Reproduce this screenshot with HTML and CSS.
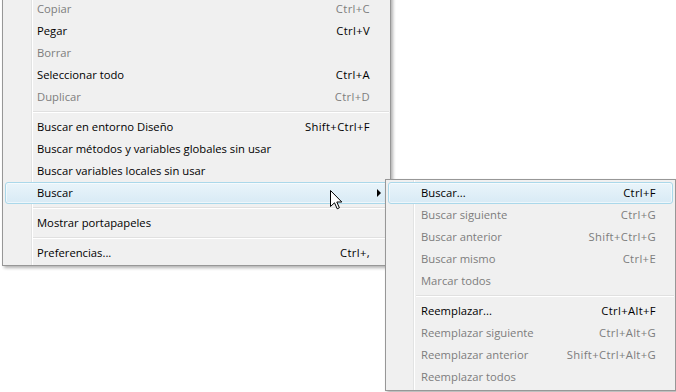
FILE: index.html
```html
<!DOCTYPE html>
<html lang="es">
<head>
<meta charset="utf-8">
<title>Menú Editar</title>
<link rel="stylesheet" href="styles.css">
</head>
<body>
<div class="stage">
  <div class="menu main">
    <div class="item disabled"><span class="label">Copiar</span><span class="key">Ctrl+C</span></div>
    <div class="item"><span class="label">Pegar</span><span class="key">Ctrl+V</span></div>
    <div class="item disabled"><span class="label">Borrar</span></div>
    <div class="item"><span class="label">Seleccionar todo</span><span class="key">Ctrl+A</span></div>
    <div class="item disabled"><span class="label">Duplicar</span><span class="key">Ctrl+D</span></div>
    <div class="sep"></div>
    <div class="item"><span class="label">Buscar en entorno Diseño</span><span class="key">Shift+Ctrl+F</span></div>
    <div class="item"><span class="label">Buscar métodos y variables globales sin usar</span></div>
    <div class="item"><span class="label">Buscar variables locales sin usar</span></div>
    <div class="item active has-sub"><span class="label">Buscar</span><span class="arrow"></span></div>
    <div class="sep"></div>
    <div class="item"><span class="label">Mostrar portapapeles</span></div>
    <div class="sep"></div>
    <div class="item"><span class="label">Preferencias...</span><span class="key">Ctrl+,</span></div>
  </div>

  <div class="menu sub">
    <div class="item active"><span class="label">Buscar...</span><span class="key">Ctrl+F</span></div>
    <div class="item disabled"><span class="label">Buscar siguiente</span><span class="key">Ctrl+G</span></div>
    <div class="item disabled"><span class="label">Buscar anterior</span><span class="key">Shift+Ctrl+G</span></div>
    <div class="item disabled"><span class="label">Buscar mismo</span><span class="key">Ctrl+E</span></div>
    <div class="item disabled"><span class="label">Marcar todos</span></div>
    <div class="sep"></div>
    <div class="item"><span class="label">Reemplazar...</span><span class="key">Ctrl+Alt+F</span></div>
    <div class="item disabled"><span class="label">Reemplazar siguiente</span><span class="key">Ctrl+Alt+G</span></div>
    <div class="item disabled"><span class="label">Reemplazar anterior</span><span class="key">Shift+Ctrl+Alt+G</span></div>
    <div class="item disabled"><span class="label">Reemplazar todos</span></div>
  </div>

  <svg class="cursor" width="13" height="20" viewBox="0 0 13 20" aria-hidden="true">
    <path d="M0.5 0.5 L0.5 16.5 L4.5 12.8 L7.2 18.8 L9.4 17.8 L6.8 12 L11.8 12 Z" fill="#ffffff" stroke="#000000" stroke-width="1" stroke-linejoin="miter"/>
  </svg>
</div>
</body>
</html>
```

FILE: styles.css
```css
html, body {
  margin: 0;
  padding: 0;
  background: #ffffff;
  overflow: hidden;
}

body {
  font-family: "Segoe UI", "Open Sans", "Noto Sans", sans-serif;
  font-size: 11.25px;
  color: #000000;
}

.stage {
  position: relative;
  width: 676px;
  height: 392px;
  overflow: hidden;
}

.menu {
  box-sizing: border-box;
  border: 1px solid #979797;
  background-color: #f0f0f0;
  padding: 2px 0;
  box-shadow: 2px 2px 3px rgba(0, 0, 0, 0.3);
}

.main {
  width: 389px;
  margin: -5px 0 0 2px;
  padding-bottom: 1px;
  background-image: linear-gradient(to right,
    transparent 28px, #e2e3e3 28px, #e2e3e3 29px,
    #ffffff 29px, #ffffff 30px, transparent 30px);
}

.sub {
  position: absolute;
  left: 385px;
  top: 179px;
  width: 291px;
  background-image: linear-gradient(to right,
    transparent 27px, #e2e3e3 27px, #e2e3e3 28px,
    #ffffff 28px, #ffffff 29px, transparent 29px);
}

.item {
  box-sizing: border-box;
  height: 22px;
  margin: 0 2px;
  padding: 0 17px 0 31px;
  border: 1px solid transparent;
  border-radius: 3px;
  display: flex;
  align-items: center;
  justify-content: space-between;
  white-space: nowrap;
  line-height: 20px;
}

.sub .item {
  padding: 0 16px 0 32px;
}

.key {
  letter-spacing: 0.35px;
}

.item.disabled {
  color: #7d7d7d;
}

.item.active {
  border-color: #aad8ea;
  background: linear-gradient(to bottom, #e9f4fa, #d8eaf5);
  box-shadow: inset 0 0 0 1px rgba(255, 255, 255, 0.55);
}

.item.has-sub {
  padding-right: 6px;
}

.arrow {
  width: 0;
  height: 0;
  border-left: 4px solid #000000;
  border-top: 4px solid transparent;
  border-bottom: 4px solid transparent;
}

.sep {
  height: 8px;
  margin: 0 1px 0 30px;
  background: linear-gradient(to bottom,
    transparent 3px, #e0e0e0 3px, #e0e0e0 4px,
    #ffffff 4px, #ffffff 5px, transparent 5px);
}

.cursor {
  position: absolute;
  left: 330px;
  top: 190px;
  display: block;
}
```
